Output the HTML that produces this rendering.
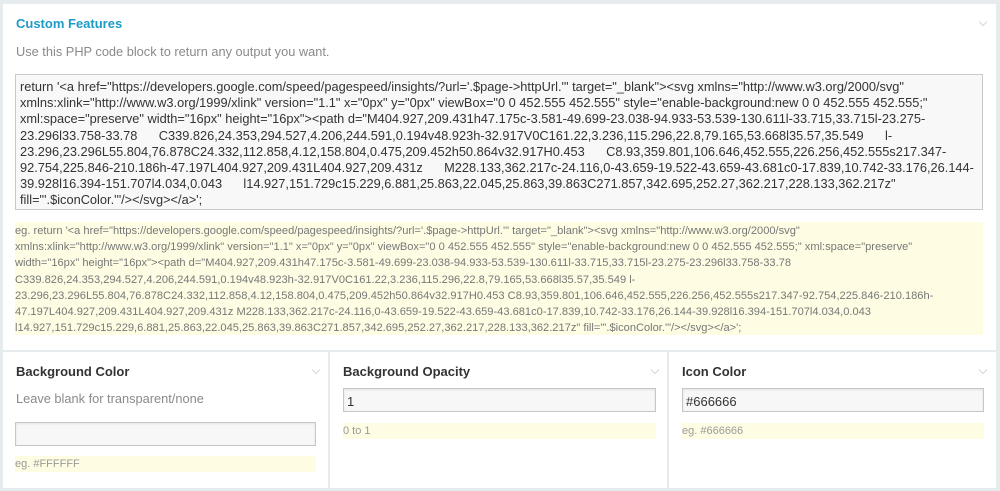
<!DOCTYPE html>
<html><head><style>
body{margin:0;width:1000px;height:491px;background:#e6ebee;font-family:"Liberation Sans",sans-serif;position:relative;overflow:hidden}
.p{position:absolute;background:#fff}
.a{position:absolute;white-space:pre}
.chev{position:absolute;width:5px;height:5px;border-right:1px solid #d4d8dc;border-bottom:1px solid #d4d8dc;transform:rotate(45deg)}
.inp{position:absolute;background:#f7f7f7;border:1px solid #c6c6c6;box-sizing:border-box;box-shadow:inset 0 1px 2px rgba(0,0,0,.08);font-size:13px;color:#333;padding:5px 3px}
.hint{position:absolute;background:#fefde4;font-size:11px;color:#999;padding:2px 0;line-height:12px}
h3{position:absolute;margin:0;font-size:13px;font-weight:bold;color:#333}
</style></head><body>
<div class="p" style="left:3px;top:4px;width:993px;height:346px"></div>
<div class="p" style="left:3px;top:352px;width:325px;height:136px"></div>
<div class="p" style="left:330px;top:352px;width:337px;height:136px"></div>
<div class="p" style="left:669px;top:352px;width:327px;height:136px"></div>
<div class="a" style="left:16px;top:16px;font-size:13px;font-weight:bold;color:#1e9bc6">Custom Features</div>
<div class="chev" style="left:980px;top:19px"></div>
<div class="a" style="left:16px;top:44px;font-size:12.8px;color:#8a8a8a">Use this PHP code block to return any output you want.</div>
<div style="position:absolute;left:15px;top:74px;width:968px;height:136px;box-sizing:border-box;background:#f8f8f8;border:1px solid #c9c9c9"></div>
<div class="a" style="left:20px;top:79px;font-size:12.8px;line-height:16.2px;color:#333">return '&lt;a href="https://developers.google.com/speed/pagespeed/insights/?url='.$page-&gt;httpUrl.'" target="_blank"&gt;&lt;svg xmlns="http://www.w3.org/2000/svg"
xmlns:xlink="http://www.w3.org/1999/xlink" version="1.1" x="0px" y="0px" viewBox="0 0 452.555 452.555" style="enable-background:new 0 0 452.555 452.555;"
xml:space="preserve" width="16px" height="16px"&gt;&lt;path d="M404.927,209.431h47.175c-3.581-49.699-23.038-94.933-53.539-130.611l-33.715,33.715l-23.275-
23.296l33.758-33.78      C339.826,24.353,294.527,4.206,244.591,0.194v48.923h-32.917V0C161.22,3.236,115.296,22.8,79.165,53.668l35.57,35.549      l-
23.296,23.296L55.804,76.878C24.332,112.858,4.12,158.804,0.475,209.452h50.864v32.917H0.453      C8.93,359.801,106.646,452.555,226.256,452.555s217.347-
92.754,225.846-210.186h-47.197L404.927,209.431L404.927,209.431z      M228.133,362.217c-24.116,0-43.659-19.522-43.659-43.681c0-17.839,10.742-33.176,26.144-
39.928l16.394-151.707l4.034,0.043      l14.927,151.729c15.229,6.881,25.863,22.045,25.863,39.863C271.857,342.695,252.27,362.217,228.133,362.217z"
fill="'.$iconColor.'"/&gt;&lt;/svg&gt;&lt;/a&gt;';</div>
<div style="position:absolute;left:15px;top:222px;width:968px;height:113px;background:#fefde4"></div>
<div class="a" style="left:15px;top:223px;font-size:11.1px;line-height:16.2px;color:#777">eg. return '&lt;a href="https://developers.google.com/speed/pagespeed/insights/?url='.$page-&gt;httpUrl.'" target="_blank"&gt;&lt;svg xmlns="http://www.w3.org/2000/svg"
xmlns:xlink="http://www.w3.org/1999/xlink" version="1.1" x="0px" y="0px" viewBox="0 0 452.555 452.555" style="enable-background:new 0 0 452.555 452.555;" xml:space="preserve"
width="16px" height="16px"&gt;&lt;path d="M404.927,209.431h47.175c-3.581-49.699-23.038-94.933-53.539-130.611l-33.715,33.715l-23.275-23.296l33.758-33.78
C339.826,24.353,294.527,4.206,244.591,0.194v48.923h-32.917V0C161.22,3.236,115.296,22.8,79.165,53.668l35.57,35.549 l-
23.296,23.296L55.804,76.878C24.332,112.858,4.12,158.804,0.475,209.452h50.864v32.917H0.453 C8.93,359.801,106.646,452.555,226.256,452.555s217.347-92.754,225.846-210.186h-
47.197L404.927,209.431L404.927,209.431z M228.133,362.217c-24.116,0-43.659-19.522-43.659-43.681c0-17.839,10.742-33.176,26.144-39.928l16.394-151.707l4.034,0.043
l14.927,151.729c15.229,6.881,25.863,22.045,25.863,39.863C271.857,342.695,252.27,362.217,228.133,362.217z" fill="'.$iconColor.'"/&gt;&lt;/svg&gt;&lt;/a&gt;';</div>

<h3 style="left:16px;top:364px">Background Color</h3>
<div class="chev" style="left:313px;top:367px"></div>
<div class="a" style="left:16px;top:391px;font-size:12.8px;color:#8a8a8a">Leave blank for transparent/none</div>
<div class="inp" style="left:15px;top:422px;width:301px;height:24px"></div>
<div class="hint" style="left:15px;top:456px;width:301px">eg. #FFFFFF</div>

<h3 style="left:343px;top:364px">Background Opacity</h3>
<div class="chev" style="left:652px;top:367px"></div>
<div class="inp" style="left:343px;top:388px;width:313px;height:24px">1</div>
<div class="hint" style="left:343px;top:423px;width:313px">0 to 1</div>

<h3 style="left:682px;top:364px">Icon Color</h3>
<div class="chev" style="left:980px;top:367px"></div>
<div class="inp" style="left:682px;top:388px;width:302px;height:24px">#666666</div>
<div class="hint" style="left:682px;top:423px;width:302px">eg. #666666</div>
</body></html>
